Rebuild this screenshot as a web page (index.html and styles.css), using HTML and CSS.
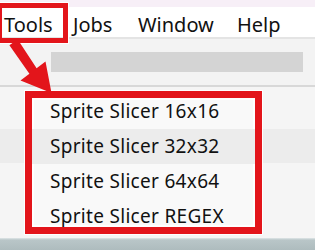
FILE: index.html
```html
<!DOCTYPE html>
<html lang="en">
<head>
  <meta charset="UTF-8" />
  <title>Tools menu</title>
  <link rel="stylesheet" href="styles.css">
</head>
<body>
  <div class="title-strip"></div>

  <nav class="menubar">
    <span class="menu-title tools">Tools</span>
    <span class="menu-title jobs">Jobs</span>
    <span class="menu-title window">Window</span>
    <span class="menu-title">Help</span>
  </nav>

  <div class="toolbar">
    <div class="search-field"></div>
  </div>

  <div class="list">
    <div class="row row-top"></div>
    <div class="row row-active"></div>
    <div class="row row-rest"></div>
  </div>

  <div class="statusbar"></div>

  <!-- Tools dropdown, outlined in red -->
  <div class="dropdown">
    <div class="dropdown-list">
      <div class="dropdown-item">Sprite Slicer 16x16</div>
      <div class="dropdown-item hover">Sprite Slicer 32x32</div>
      <div class="dropdown-item">Sprite Slicer 64x64</div>
      <div class="dropdown-item">Sprite Slicer REGEX</div>
    </div>
  </div>

  <!-- annotation: box round "Tools" and arrow to the menu -->
  <div class="mark-tools"></div>
  <svg class="arrow" width="315" height="250" viewBox="0 0 315 250">
    <polygon points="9.4,45.2 17.6,39.3 36.6,68.3 45.5,61.5 51.5,93 20.5,80.5 29.4,73.7" fill="#e3151b" />
  </svg>
</body>
</html>
```

FILE: styles.css
```css
* { box-sizing: border-box; }

body {
  margin: 0;
  width: 315px;
  height: 250px;
  overflow: hidden;
  position: relative;
  display: flex;
  flex-direction: column;
  background: #f3f3f3;
  font-family: 'Noto Sans', 'Open Sans', sans-serif;
  color: #111;
}

.title-strip {
  height: 7px;
  background: #f7eff7;
}

.menubar {
  height: 32px;
  display: flex;
  align-items: center;
  padding: 5px 0 0 4px;
  background: #ffffff;
  border-bottom: 2px solid #e4e4e4;
  font-size: 20px;
}

.menu-title { white-space: nowrap; }
.menu-title.tools { width: 69px; }
.menu-title.jobs { width: 65px; }
.menu-title.window { width: 99px; }

.toolbar {
  height: 48px;
  padding: 13px 0 0 51px;
  border-bottom: 2px solid #d8d8d8;
}

.search-field {
  width: 252px;
  height: 20px;
  background: #d4d4d4;
}

.list {
  flex: 1;
  display: flex;
  flex-direction: column;
  background: #f5f5f5;
}

.row-top { height: 42px; }
.row-active { height: 34px; background: #ececec; }
.row-rest { flex: 1; }

.statusbar {
  height: 12px;
  background: linear-gradient(#dfe6e7, #b9c6c8 2px, #aebcbe);
}

.dropdown {
  position: absolute;
  left: 25px;
  top: 91px;
  width: 237px;
  height: 143px;
  border: 7px solid #e3151b;
  box-shadow: 0 0 0 1px #ffffff, inset 0 0 0 2px #ffffff;
  background: #f9f9f9;
  overflow: hidden;
}

.dropdown-list {
  margin-top: -4px;
}

.dropdown-item {
  height: 35px;
  line-height: 35px;
  padding-left: 18px;
  font-size: 19px;
  letter-spacing: 0.3px;
  white-space: nowrap;
}

.dropdown-item.hover { background: #ececec; }

.mark-tools {
  position: absolute;
  left: -3px;
  top: 3px;
  width: 71px;
  height: 40px;
  border: 5px solid #e3151b;
  box-shadow: 0 0 0 1px #ffffff;
}

.arrow {
  position: absolute;
  left: 0;
  top: 0;
  pointer-events: none;
}
```
